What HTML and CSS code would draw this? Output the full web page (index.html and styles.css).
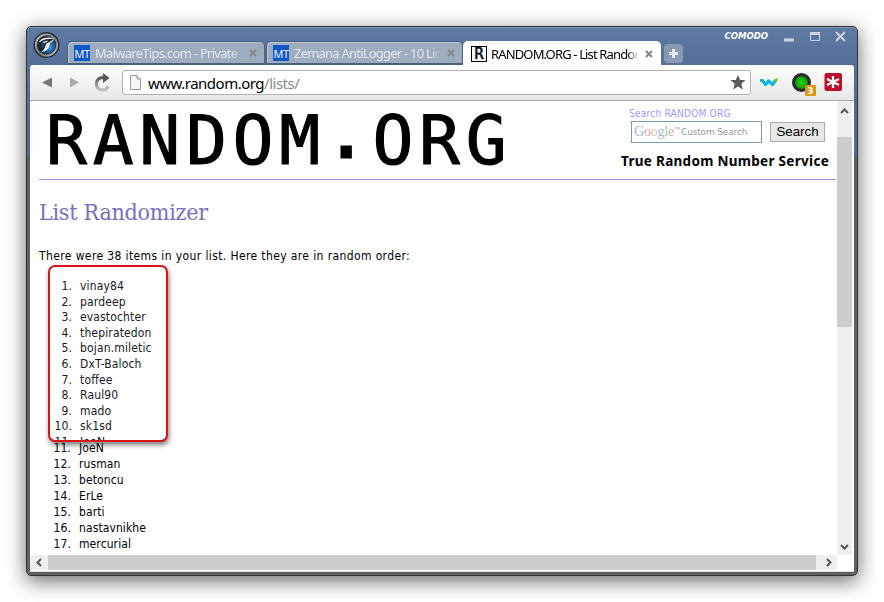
FILE: index.html
```html
<!DOCTYPE html>
<html lang="en">
<head>
<meta charset="utf-8">
<title>RANDOM.ORG - List Randomizer</title>
<link rel="stylesheet" href="styles.css">
</head>
<body>
<div class="window">
  <header class="titlebar">
    <svg class="dragon" width="28" height="28" viewBox="0 0 28 28">
      <defs>
        <linearGradient id="ring" x2="1" y2="1"><stop stop-color="#ddd"/><stop offset=".5" stop-color="#777"/><stop offset="1" stop-color="#ccc"/></linearGradient>
        <radialGradient id="orb" cx=".65" cy=".6"><stop stop-color="#3aa0ea"/><stop offset=".55" stop-color="#1b5f9e"/><stop offset="1" stop-color="#1a222e"/></radialGradient>
      </defs>
      <circle cx="14.500" cy="14" r="12.300" fill="url(#ring)" stroke="#242a33" stroke-width="1.400"/>
      <circle cx="14.500" cy="14" r="9.300" fill="url(#orb)" stroke="#333b45"/>
      <path d="M7 11C10 6 16 6 22 7C22 10 20 11 18 12C18 17 14 21 9 21C13 18 14 15 13 12C11 11 9 11 7 11Z" fill="#eef2f6"/>
      <path d="M8 12C12 8 16 9 20 8.500C17 11 14 11 13 13C13 16 11 18 9 20" fill="none" stroke="#1a1f27" stroke-width="1.500"/>
    </svg>
    <nav class="tabs">
      <div class="tab"><span class="mt">MT</span><span class="label">MalwareTips.com - Private M</span><svg class="x" width="8" height="8" viewBox="0 0 8 8"><path d="M1 1L7 7M7 1L1 7"/></svg></div>
      <div class="tab second"><span class="mt">MT</span><span class="label">Zemana AntiLogger - 10 Lice</span><svg class="x" width="8" height="8" viewBox="0 0 8 8"><path d="M1 1L7 7M7 1L1 7"/></svg></div>
      <div class="tab active"><span class="fav">R</span><span class="label">RANDOM.ORG - List Randor</span><svg class="x" width="8" height="8" viewBox="0 0 8 8"><path d="M1 1L7 7M7 1L1 7"/></svg></div>
      <div class="newtab"><svg width="9" height="9" viewBox="0 0 9 9"><path d="M4.500 0V9M0 4.500H9" stroke="#e4e7ec" stroke-width="3"/></svg></div>
    </nav>
    <div class="controls">
      <span class="brand">COMODO</span>
      <svg width="64" height="14" viewBox="0 0 64 14" fill="none" stroke="#cdd5e0">
        <path d="M1 11H11" stroke-width="3"/>
        <path d="M27.500 4V11.500H36.500V4"/><path d="M27 4.500H37" stroke-width="3"/>
        <path d="M53 3L62 12M62 3L53 12" stroke-width="2"/>
      </svg>
    </div>
  </header>
  <div class="toolbar">
    <svg class="nav" width="84" height="24" viewBox="0 0 84 24">
      <defs><linearGradient id="reload" y2="1" x2="0"><stop stop-color="#555"/><stop offset="1" stop-color="#c4c4c4"/></linearGradient></defs>
      <path d="M6 11.500L16 6.500V16.500Z" fill="#777"/><path d="M34 6.500L43 11.500L34 16.500Z" fill="#aaa"/>
      <path d="M68 6.500C63 6.500 60.500 9 60.500 13C60.500 20 70 21 72 15.500" fill="none" stroke="url(#reload)" stroke-width="3"/>
      <path d="M67 2L73.500 7L67 12Z" fill="#555"/>
    </svg>
    <div class="address">
      <svg width="11" height="15" viewBox="0 0 11 15"><path d="M.5.5H7L10.500 4V14.500H.5Z M7 .5V4H10.500" fill="#f7f7f7" stroke="#999"/></svg>
      <span class="url">www.random.org<i>/lists/</i></span>
      <svg class="star" width="16" height="15" viewBox="0 0 16 15"><path d="M8 0L10.200 5H15.500L11.300 8.800L12.800 14.500L8 11.500L3.200 14.500L4.700 8.800L.5 5H5.800Z" fill="#5c5c5c"/></svg>
    </div>
    <svg class="exts" width="86" height="24" viewBox="0 0 86 24">
      <defs><radialGradient id="green"><stop stop-color="#24de15"/><stop offset="1" stop-color="#078303"/></radialGradient></defs>
      <path d="M2 9.500H4.500L7.500 13.500L10.500 10L14.500 13.500L18 9" fill="none" stroke="#10b3dd" stroke-width="3.200" stroke-linejoin="round"/>
      <path d="M16.500 10L17.500 7.500H20L19 11Z" fill="#63cf17"/>
      <circle cx="43.500" cy="11.500" r="8" fill="url(#green)" stroke="#292929" stroke-width="3"/>
      <rect x="47" y="14" width="11" height="11" rx="1.500" fill="#da970c"/><text x="52.500" y="23" class="badge">3</text>
      <rect x="66.500" y="2" width="17.500" height="18" rx="2" fill="#bd0d2e"/>
      <path d="M75 5V17M69 8L81 14M81 8L69 14" stroke="#fff" stroke-width="2.300"/>
    </svg>
  </div>
  <div class="viewport">
    <main class="page">
      <div class="masthead">
        <div class="logo">RANDOM<span class="dot">.</span>ORG</div>
        <div class="search">
          <div class="searchlabel">Search RANDOM.ORG</div>
          <div class="searchrow">
            <div class="input"><span class="google"><b class="gb">G</b><b class="gr">o</b><b class="gy">o</b><b class="gb">g</b><b class="gg">l</b><b class="gr">e</b><sup>™</sup></span><span class="custom">Custom Search</span></div>
            <div class="button">Search</div>
          </div>
          <div class="tagline">True Random Number Service</div>
        </div>
      </div>
      <h1>List Randomizer</h1>
      <p>There were 38 items in your list. Here they are in random order:</p>
      <div class="picked">
        <ol>
          <li><b>1.</b>vinay84</li><li><b>2.</b>pardeep</li><li><b>3.</b>evastochter</li><li><b>4.</b>thepiratedon</li><li><b>5.</b>bojan.miletic</li><li><b>6.</b>DxT-Baloch</li><li><b>7.</b>toffee</li><li><b>8.</b>Raul90</li><li><b>9.</b>mado</li><li><b>10.</b>sk1sd</li><li><b>11.</b>JoeN</li>
        </ol>
      </div>
      <ol class="rest">
        <li><b>11.</b>JoeN</li><li><b>12.</b>rusman</li><li><b>13.</b>betoncu</li><li><b>14.</b>ErLe</li><li><b>15.</b>barti</li><li><b>16.</b>nastavnikhe</li><li><b>17.</b>mercurial</li>
      </ol>
    </main>
    <div class="vscroll">
      <svg width="9" height="6" viewBox="0 0 9 6"><path d="M1 5L4.500 1.500L8 5"/></svg>
      <div class="vthumb"></div>
      <svg class="down" width="9" height="6" viewBox="0 0 9 6"><path d="M1 1L4.500 4.500L8 1"/></svg>
    </div>
    <div class="hscroll">
      <svg width="6" height="9" viewBox="0 0 6 9"><path d="M5 1L1.500 4.500L5 8"/></svg>
      <div class="hthumb"></div>
      <svg class="right" width="6" height="9" viewBox="0 0 6 9"><path d="M1 1L4.500 4.500L1 8"/></svg>
    </div>
  </div>
</div>
</body>
</html>
```
FILE: styles.css
```css
* { box-sizing: border-box; }
body { margin: 0; width: 884px; height: 602px; overflow: hidden; background: #fff; padding: 26px; }
.window { width: 832px; height: 550px; border: 1px solid #333; border-radius: 5px; padding: 0 3px 3px; display: flex; flex-direction: column;
  background: linear-gradient(#5f7ba3 0, #536f98 40px, #4f6b92 128px, #606060 130px, #606060 100%);
  box-shadow: 0 5px 20px rgba(0,0,0,.6), inset 0 1px #8097b8; }
.titlebar { height: 38px; flex: none; display: flex; align-items: flex-start; }
.dragon { margin: 4px 0 0 2px; flex: none; }
.tabs { display: flex; margin: 14px 0 0 7px; height: 24px; flex: none; }
.tab { width: 198px; height: 24px; border: 1px solid #4b5f7e; border-bottom-width: 2px; border-radius: 5px 5px 0 0; background: #9eacbf; display: flex; align-items: center; padding: 0 7px 0 6px; color: #e5e9ee; font: 13px/20px "Noto Sans", sans-serif; box-shadow: inset 1px 1px #bac4d2; }
.tab.second { width: 197px; padding-left: 6px; margin-left: 1px; }
.tab.active { background: #fff; color: #000; border-color: #fff; border-bottom-width: 0; width: 198px; box-shadow: none; padding-left: 7px; }
.label { width: 148px; flex: none; margin-left: 5px; overflow: hidden; white-space: nowrap; letter-spacing: -.72px; -webkit-mask-image: linear-gradient(90deg, #000 92%, transparent); mask-image: linear-gradient(90deg, #000 92%, transparent); }
.second .label { letter-spacing: -.78px; }
.active .label { letter-spacing: -.85px; margin-left: 4px; }
.x { margin-left: auto; flex: none; }
.x path { stroke: #858585; stroke-width: 2; }
.mt { width: 16px; height: 16px; flex: none; background: #1257c7; color: #fff; font: 11px/17px "Open Sans", sans-serif; letter-spacing: -.5px; text-align: center; }
.fav { width: 16px; height: 16px; flex: none; border: 1px solid #000; color: #111; font: 15px/14px "DejaVu Sans Mono", monospace; -webkit-text-stroke: .6px #111; text-align: center; }
.newtab { width: 19px; height: 19px; margin: 3px 0 0 3px; border-radius: 4px; background: #8799b5; display: flex; align-items: center; justify-content: center; }
.controls { margin-left: auto; display: flex; align-items: center; padding: 2px 7px 0 0; }
.brand { font: italic bold 8.500px/14px "DejaVu Sans", sans-serif; color: #fff; margin-right: 15px; }
.toolbar { height: 36px; flex: none; background: linear-gradient(#fdfdfd, #e7e7e7); border-bottom: 1px solid #aaa; border-radius: 3px 3px 0 0; display: flex; align-items: center; padding-left: 6px; }
.nav { flex: none; margin-right: 2px; }
.address { width: 629px; height: 25px; border: 1px solid #b0b0b0; border-radius: 3px; background: #fff; display: flex; align-items: center; padding: 0 4px 0 7px; }
.url { font: 15px/20px "Noto Sans", sans-serif; color: #000; margin-left: 7px; letter-spacing: -.5px; }
.url i { font-style: normal; color: #888; }
.star { margin-left: auto; }
.exts { margin-left: 7px; overflow: visible; }
.badge { font: bold 9px "DejaVu Sans", sans-serif; fill: #fff; text-anchor: middle; }
.viewport { flex: 1; min-height: 0; background: #fff; display: grid; grid-template-columns: 807px 15px; grid-template-rows: 454px 15px; border-bottom: 1px solid #ddd; }
.page { overflow: hidden; padding: 0 0 0 9px; font: 12px/16px "DejaVu Sans Condensed", "DejaVu Sans", sans-serif; color: #000; }
.masthead { height: 79px; border-bottom: 1px solid #9999ff; display: flex; justify-content: space-between; width: 797px; }
.logo { font: 68px/80px "DejaVu Sans Mono", monospace; letter-spacing: 5.700px; margin-left: 7px; -webkit-text-stroke: 1.100px #000; }
.dot { -webkit-text-stroke: 3px #000; position: relative; top: -7px; }
.search { width: 215px; padding-top: 5px; white-space: nowrap; }
.searchlabel { color: #9999ff; font: 10px/15px "DejaVu Sans Condensed", sans-serif; padding-left: 8px; letter-spacing: .25px; }
.searchrow { display: flex; gap: 8px; padding-left: 10px; }
.input { width: 131px; height: 22px; border: 1px solid #7898b8; display: flex; align-items: center; padding-left: 2px; color: #999; }
.google { font: 14px/18px "Liberation Serif", serif; width: 46px; letter-spacing: -.2px; }
.google b { font-weight: 400; }
.google sup { font-size: 6px; vertical-align: 5px; line-height: 0; }
.gb { color: #a4b5d8; } .gr { color: #dba6a6; } .gy { color: #d8c98e; } .gg { color: #a0cca8; }
.custom { font: 9px/14px "DejaVu Sans", sans-serif; margin-left: 1px; letter-spacing: -.15px; }
.button { width: 55px; height: 20px; margin-top: 1px; border: 1px solid #acacac; background: #e7e7e7; font: 13.333px/18px "Liberation Sans", sans-serif; text-align: center; }
.tagline { font: bold 13.500px/18px "Noto Sans", sans-serif; margin-top: 9px; letter-spacing: .3px; }
h1 { font: 23px/30px "DejaVu Serif Condensed", "DejaVu Serif", serif; color: #7570c0; margin: 17px 0 0; letter-spacing: -.25px; }
p { margin: 21px 0 0; white-space: nowrap; letter-spacing: .385px; }
ol { list-style: none; margin: 0; padding: 0; }
li { display: flex; height: 16px; line-height: 16px; letter-spacing: .1px; }
li b { font-weight: 400; width: 32px; margin-right: 8px; text-align: right; flex: none; }
.picked { width: 120px; height: 177px; border: 2.500px solid #dc1119; border-radius: 7px; margin: 1px 0 0 9px; overflow: hidden; box-shadow: 1px 3px 5px rgba(0,0,0,.5); background: #fff; padding-top: 12px; color: #201925; position: relative; z-index: 1; }
.picked li { height: 15.600px; line-height: 15.600px; letter-spacing: .15px; }
.picked li b { width: 22px; margin-right: 8px; }
.rest { margin-top: -2px; }
.vscroll { background: #efefef; display: flex; flex-direction: column; align-items: center; padding: 7px 0 5px; }
.vscroll svg path, .hscroll svg path { fill: none; stroke: #555; stroke-width: 2; }
.vthumb { width: 15px; height: 190px; background: #cdcdcd; margin-top: 23px; }
.down { margin-top: auto; }
.hscroll { background: #efefef; display: flex; align-items: center; padding: 0 5px 0 6px; }
.hthumb { width: 768px; height: 15px; background: #cdcdcd; margin-left: 6px; }
.right { margin-left: auto; }
```
